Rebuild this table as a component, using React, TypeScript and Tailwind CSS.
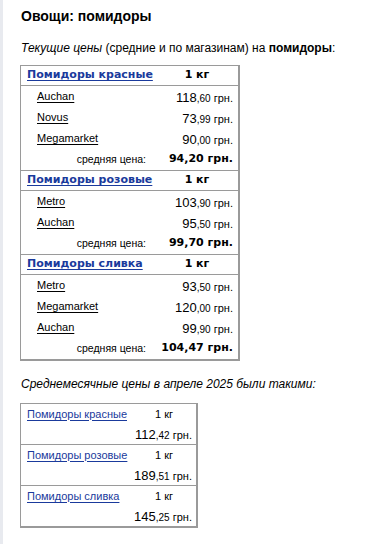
import React from "react";

const LINK = "text-[#1a3a9c]";

type Shop = { name: string; int: string; dec: string };
type Section = { title: string; shops: Shop[]; avg: string };

const sections: Section[] = [
  {
    title: "Помидоры красные",
    shops: [
      { name: "Auchan", int: "118", dec: ",60" },
      { name: "Novus", int: "73", dec: ",99" },
      { name: "Megamarket", int: "90", dec: ",00" },
    ],
    avg: "94,20 грн.",
  },
  {
    title: "Помидоры розовые",
    shops: [
      { name: "Metro", int: "103", dec: ",90" },
      { name: "Auchan", int: "95", dec: ",50" },
    ],
    avg: "99,70 грн.",
  },
  {
    title: "Помидоры сливка",
    shops: [
      { name: "Metro", int: "93", dec: ",50" },
      { name: "Megamarket", int: "120", dec: ",00" },
      { name: "Auchan", int: "99", dec: ",90" },
    ],
    avg: "104,47 грн.",
  },
];

const monthly = [
  { title: "Помидоры красные", int: "112", dec: ",42" },
  { title: "Помидоры розовые", int: "189", dec: ",51" },
  { title: "Помидоры сливка", int: "145", dec: ",25" },
];

function Price({ int, dec }: { int: string; dec: string }) {
  return (
    <span className="whitespace-nowrap text-black">
      <span className="text-[13px]">{int}</span>
      <span className="text-[10px]">{dec}</span>
      <span className="text-[11px]"> грн.</span>
    </span>
  );
}

const verdana = { fontFamily: '"DejaVu Sans", Verdana, sans-serif' };

export default function App() {
  return (
    <div
      className="flex min-h-[544px] bg-white text-black"
      style={{ fontFamily: '"Liberation Sans", Arial, sans-serif' }}
    >
      <div className="w-[3px] shrink-0 bg-[#e8eaef]" />
      <div className="flex-1 pl-[17px] pt-[8px]">
        <h1 className="text-[14px] font-bold leading-[16px] pl-[1px]">Овощи: помидоры</h1>
        <p className="mt-[17px] text-[12px] leading-[14px] pl-[1px]">
          <i>Текущие цены</i> (средние и по магазинам) на <b>помидоры</b>:
        </p>

        <div className="mt-[10px] w-[220px] border-l border-t border-r-2 border-b-2 border-[#9a9a9a]">
          {sections.map((s, si) => (
            <div key={si} className={si > 0 ? "border-t border-[#9a9a9a]" : ""}>
              <div
                className="flex h-[20px] items-center border-b border-[#9a9a9a] text-[11px] font-bold"
                style={verdana}
              >
                <span className={`flex-1 pl-[6px] underline underline-offset-[2px] ${LINK}`}>
                  {s.title}
                </span>
                <span className="w-[82px] text-center">1 кг</span>
              </div>
              {s.shops.map((sh, i) => (
                <div key={i} className="flex h-[21px] items-center">
                  <span className="flex-1 pl-[16px] text-[11px] underline underline-offset-[2px]">
                    {sh.name}
                  </span>
                  <span className="pr-[5px]">
                    <Price int={sh.int} dec={sh.dec} />
                  </span>
                </div>
              ))}
              <div className="flex h-[21px] items-center">
                <span className="w-[125px] text-right text-[10.5px]">средняя цена:</span>
                <span className="flex-1 pr-[5px] text-right text-[11px] font-bold" style={verdana}>
                  {s.avg}
                </span>
              </div>
            </div>
          ))}
        </div>

        <p className="mt-[16px] text-[12px] italic leading-[14px] pl-[1px]">
          Среднемесячные цены в апреле 2025 были такими:
        </p>

        <div className="mt-[12px] w-[178px] border-l border-t border-r-2 border-b-2 border-[#9a9a9a]">
          {monthly.map((m, i) => (
            <div key={i} className={i > 0 ? "border-t border-[#9a9a9a]" : ""}>
              <div className="flex h-[20px] items-center text-[11px]">
                <span className={`flex-1 pl-[6px] underline underline-offset-[2px] ${LINK}`}>
                  {m.title}
                </span>
                <span className="w-[64px] text-center">1 кг</span>
              </div>
              <div className="flex h-[20px] items-center justify-end pr-[4px]">
                <Price int={m.int} dec={m.dec} />
              </div>
            </div>
          ))}
        </div>
      </div>
    </div>
  );
}
